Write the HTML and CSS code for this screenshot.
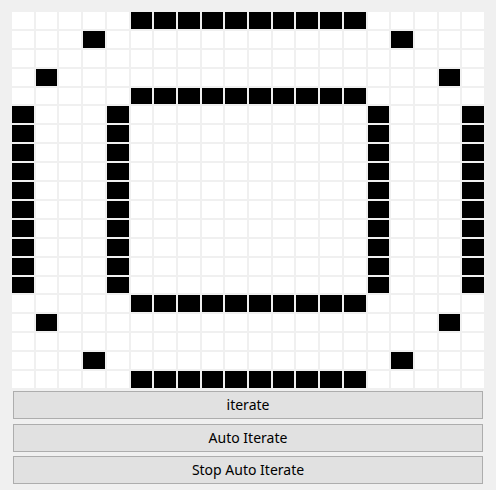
FILE: index.html
```html
<!DOCTYPE html>
<html>
<head>
<meta charset="utf-8">
<link rel="stylesheet" href="styles.css">
</head>
<body>
<div class="app">
  <div class="board" id="board"></div>
  <div class="controls">
    <button class="btn">iterate</button>
    <button class="btn">Auto Iterate</button>
    <button class="btn">Stop Auto Iterate</button>
  </div>
</div>
<script src="script.js"></script>
</body>
</html>
```

FILE: styles.css
```css
html, body {
  margin: 0;
  padding: 0;
  background: #f0f0f0;
}
.app {
  width: 472px;
  padding: 12px 12px 0 12px;
  display: flex;
  flex-direction: column;
}
.board {
  width: 472px;
  height: 376px;
  display: grid;
  grid-template-columns: repeat(20, 1fr);
  grid-template-rows: repeat(20, 1fr);
  gap: 2px;
  background: #f0f0f0;
}
.cell {
  background: #ffffff;
}
.cell.on {
  background: #000000;
}
.controls {
  margin: 3px 1px 0 1px;
  display: flex;
  flex-direction: column;
  gap: 4.6px;
}
.btn {
  height: 28px;
  margin: 0;
  padding: 0;
  background: #e1e1e1;
  border: 1px solid #adadad;
  border-radius: 0;
  font-family: "Noto Sans", "Open Sans", sans-serif;
  font-size: 14px;
  color: #000;
  line-height: 26px;
}
```

FILE: script.js
```js
(function () {
  var on = {};
  function set(r, c) { on[r + "," + c] = true; }
  function band(r) { for (var c = 5; c <= 14; c++) set(r, c); }
  band(0); band(4); band(15); band(19);
  set(1, 3); set(1, 16); set(18, 3); set(18, 16);
  set(3, 1); set(3, 18); set(16, 1); set(16, 18);
  for (var r = 5; r <= 14; r++) { set(r, 0); set(r, 4); set(r, 15); set(r, 19); }
  var board = document.getElementById("board");
  for (var i = 0; i < 20; i++) {
    for (var j = 0; j < 20; j++) {
      var d = document.createElement("div");
      d.className = on[i + "," + j] ? "cell on" : "cell";
      board.appendChild(d);
    }
  }
})();
```
